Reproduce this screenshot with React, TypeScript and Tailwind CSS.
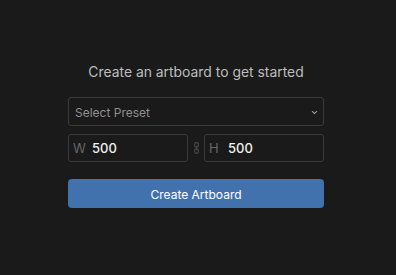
import React from "react";

export default function App() {
  return (
    <div
      className="w-[396px] h-[275px] bg-[#1a1a1a] flex justify-center pr-[4px] pt-[63px]"
      style={{ fontFamily: "Inter, 'Liberation Sans', sans-serif" }}
    >
      <div className="w-[256px] flex flex-col">
        <h1 className="text-center text-[13.9px] leading-[18px] text-[#bdbdbd] mb-[16px]">
          Create an artboard to get started
        </h1>
        <div className="h-[29px] border border-[#3a3a3a] rounded-[3px] flex items-center justify-between pl-[6px] pr-[5px] pt-[2px]">
          <span className="text-[12px] text-[#8f8f8f]">Select Preset</span>
          <svg width="7" height="5" viewBox="0 0 7 5" fill="none">
            <path d="M1 1.2 L3.5 3.6 L6 1.2" stroke="#a0a0a0" strokeWidth="1.1" />
          </svg>
        </div>
        <div className="flex items-center mt-[8px] h-[28px]">
          <div className="flex-1 h-full border border-[#3a3a3a] rounded-[3px] flex items-center pl-[4px] pt-[1px]">
            <span className="text-[13px] text-[#666666] w-[19px]">W</span>
            <span className="text-[13px] font-medium text-[#f0f0f0]">500</span>
          </div>
          <div className="w-[16px] flex justify-center">
            <svg width="5" height="12" viewBox="0 0 5 12" fill="none">
              <rect x="0.6" y="0.6" width="3.8" height="4.6" rx="1.9" stroke="#4a4a4a" strokeWidth="1.1" />
              <rect x="0.6" y="6.8" width="3.8" height="4.6" rx="1.9" stroke="#4a4a4a" strokeWidth="1.1" />
              <line x1="2.5" y1="4" x2="2.5" y2="8" stroke="#4a4a4a" strokeWidth="1.1" />
            </svg>
          </div>
          <div className="flex-1 h-full border border-[#3a3a3a] rounded-[3px] flex items-center pl-[4px] pt-[1px]">
            <span className="text-[13px] text-[#666666] w-[19px]">H</span>
            <span className="text-[13px] font-medium text-[#f0f0f0]">500</span>
          </div>
        </div>
        <button className="mt-[17px] h-[29px] rounded-[4px] bg-[#4272ad] text-white text-[12px] flex items-center justify-center pt-[2px]">
          Create Artboard
        </button>
      </div>
    </div>
  );
}
